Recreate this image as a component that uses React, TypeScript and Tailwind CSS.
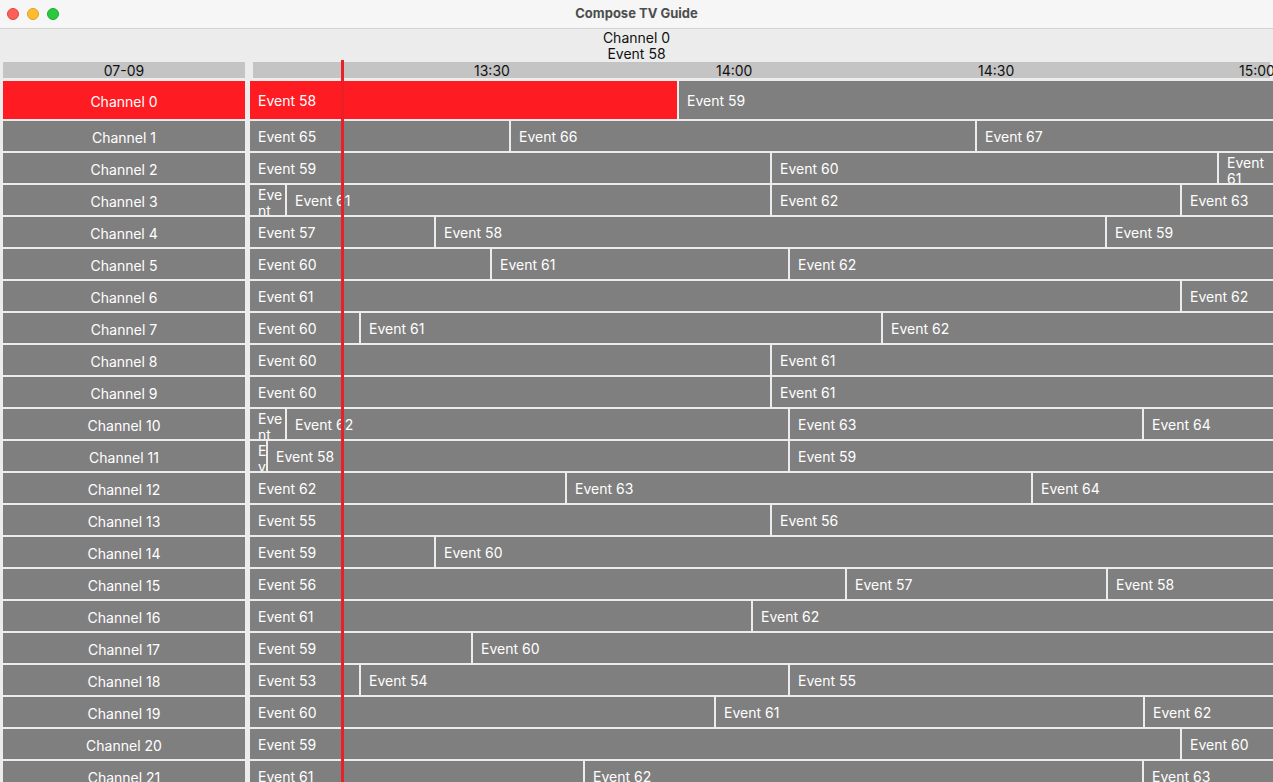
const rows: { channel: number; events: [number, number][] }[] = [
  { channel: 0, events: [[58, 250], [59, 679]] },
  { channel: 1, events: [[65, 250], [66, 511], [67, 977]] },
  { channel: 2, events: [[59, 250], [60, 772], [61, 1219]] },
  { channel: 3, events: [[60, 250], [61, 287], [62, 772], [63, 1182]] },
  { channel: 4, events: [[57, 250], [58, 436], [59, 1107]] },
  { channel: 5, events: [[60, 250], [61, 492], [62, 790]] },
  { channel: 6, events: [[61, 250], [62, 1182]] },
  { channel: 7, events: [[60, 250], [61, 361], [62, 883]] },
  { channel: 8, events: [[60, 250], [61, 772]] },
  { channel: 9, events: [[60, 250], [61, 772]] },
  { channel: 10, events: [[61, 250], [62, 287], [63, 790], [64, 1144]] },
  { channel: 11, events: [[57, 250], [58, 268], [59, 790]] },
  { channel: 12, events: [[62, 250], [63, 567], [64, 1033]] },
  { channel: 13, events: [[55, 250], [56, 772]] },
  { channel: 14, events: [[59, 250], [60, 436]] },
  { channel: 15, events: [[56, 250], [57, 847], [58, 1108]] },
  { channel: 16, events: [[61, 250], [62, 753]] },
  { channel: 17, events: [[59, 250], [60, 473]] },
  { channel: 18, events: [[53, 250], [54, 361], [55, 790]] },
  { channel: 19, events: [[60, 250], [61, 716], [62, 1145]] },
  { channel: 20, events: [[59, 250], [60, 1182]] },
  { channel: 21, events: [[61, 250], [62, 585], [63, 1144]] },
];

// label left edges, page x
const times: [string, number][] = [
  ["13:30", 474],
  ["14:00", 716],
  ["14:30", 978],
  ["15:00", 1239],
];

const TitleBar = () => (
  <div className="h-[29px] bg-[#f6f6f6] border-b border-[#d3d3d3] flex items-center relative shrink-0">
    <div className="flex gap-[8px] pl-[7px]">
      <span className="w-[12px] h-[12px] rounded-full bg-[#fe5f57] border border-[#e14640]" />
      <span className="w-[12px] h-[12px] rounded-full bg-[#febc2e] border border-[#dfa023]" />
      <span className="w-[12px] h-[12px] rounded-full bg-[#28c840] border border-[#1dad2b]" />
    </div>
    <div className="absolute inset-0 flex items-center justify-center text-[13px] font-bold text-[#4d4d4d]">
      Compose TV Guide
    </div>
  </div>
);

const Row = ({ channel, events }: { channel: number; events: [number, number][] }) => {
  const focused = channel === 0;
  return (
    <div className={`flex shrink-0 ${focused ? "h-[38px]" : "h-[30px] mt-[2px]"}`}>
      <div
        className={`ml-[3px] w-[242px] shrink-0 flex items-center justify-center pt-[2px] text-white ${
          focused ? "bg-[#fe1b22]" : "bg-[#7f7f7f]"
        }`}
      >
        Channel {channel}
      </div>
      <div className="ml-[5px] flex-1 flex gap-[2px] overflow-hidden">
        {events.map(([num, start], i) => {
          const next = events[i + 1];
          const last = !next;
          return (
            <div
              key={num}
              className={`h-full flex [align-items:safe_center] pl-[8px] pr-[2px] pt-[2px] overflow-hidden text-white leading-4 [overflow-wrap:anywhere] ${
                last ? "flex-1" : "shrink-0"
              } ${focused && i === 0 ? "bg-[#fe1b22]" : "bg-[#7f7f7f]"}`}
              style={last ? undefined : { width: next[1] - 2 - start }}
            >
              <span>Event {num}</span>
            </div>
          );
        })}
      </div>
    </div>
  );
};

export default function App() {
  return (
    <div
      className="w-[1273px] h-[782px] overflow-hidden bg-[#ececec] flex flex-col relative text-[14px]"
      style={{ fontFamily: "Inter, 'Noto Sans', sans-serif" }}
    >
      <TitleBar />
      <div className="h-[32px] pt-[1px] shrink-0 flex flex-col items-center leading-4 text-[#111]">
        <span>Channel 0</span>
        <span>Event 58</span>
      </div>
      <div className="mt-[1px] h-[16px] flex shrink-0 leading-4 text-[#111]">
        <div className="ml-[3px] w-[242px] bg-[#c4c4c4] text-center pt-[1px]">07-09</div>
        <div className="ml-[8px] w-[1017px] bg-[#c4c4c4] relative">
          {times.map(([t, x]) => (
            <span key={t} className="absolute top-[1px] whitespace-nowrap" style={{ left: x - 253 }}>
              {t}
            </span>
          ))}
        </div>
      </div>
      <div className="mt-[3px] flex flex-col">
        {rows.map((r) => (
          <Row key={r.channel} channel={r.channel} events={r.events} />
        ))}
      </div>
      <div className="absolute left-[341px] top-[60px] bottom-0 w-[3px] bg-[#ea1f27]" />
    </div>
  );
}
